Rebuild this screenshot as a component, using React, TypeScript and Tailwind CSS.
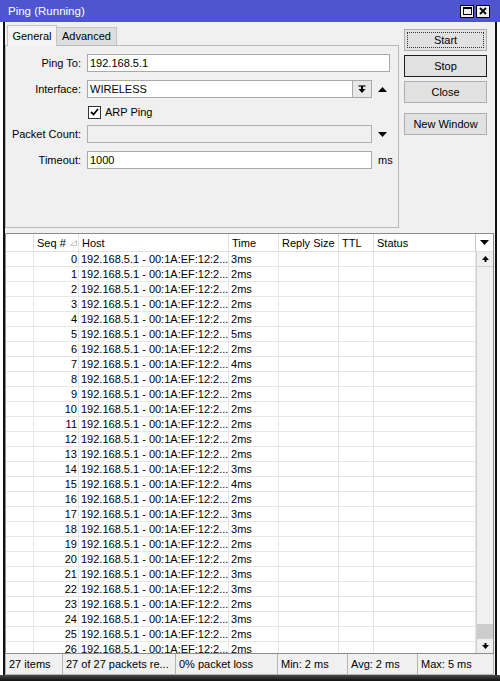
import React from 'react';

const times = [3, 2, 2, 2, 2, 5, 2, 4, 2, 2, 2, 2, 2, 2, 3, 4, 2, 3, 3, 2, 2, 3, 3, 2, 3, 2, 2];

function DownTri() {
  return (
    <svg width="9" height="5" viewBox="0 0 9 5">
      <path d="M0 0H9L4.5 5Z" fill="#000" />
    </svg>
  );
}

function UpTri() {
  return (
    <svg width="9" height="5" viewBox="0 0 9 5">
      <path d="M0 5H9L4.5 0Z" fill="#000" />
    </svg>
  );
}

function FormRow({ label, children }: { label: string; children: React.ReactNode }) {
  return (
    <div className="flex items-center h-[18px]">
      <div className="w-[76px] text-right pr-[1px] whitespace-nowrap">{label}</div>
      <div className="ml-[5px] flex items-center">{children}</div>
    </div>
  );
}

function WinButton({ label, kind }: { label: string; kind?: 'focus' | 'default' }) {
  const border = kind === 'default' ? 'border-[#1e1e1e]' : 'border-[#adadad]';
  return (
    <div className={`h-[22px] w-[83px] bg-[#e1e1e1] border ${border} flex items-center justify-center relative`}>
      {kind === 'focus' && (
        <div className="absolute inset-[2px] border border-dotted border-[#333]" />
      )}
      <span>{label}</span>
    </div>
  );
}

export default function App() {
  return (
    <div className="w-[500px] h-[681px] overflow-hidden bg-white flex flex-col font-['Liberation_Sans',Arial,sans-serif] text-[11px] text-black leading-[13px]">
      {/* title bar */}
      <div className="h-[22px] bg-[#4f55cf] flex items-center pl-[8px] pr-[10px]">
        <span className="text-white text-[11.5px]">Ping (Running)</span>
        <div className="ml-auto flex gap-[2px]">
          <div className="w-[14px] h-[13px] bg-[#f0f0f0] border border-black flex items-center justify-center">
            <div className="w-[9px] h-[8px] border border-black border-t-2" />
          </div>
          <div className="w-[14px] h-[13px] bg-[#f0f0f0] border border-black flex items-center justify-center">
            <svg width="8" height="8" viewBox="0 0 8 8">
              <path d="M1 1L7 7M7 1L1 7" stroke="#000" strokeWidth="1.8" />
            </svg>
          </div>
        </div>
      </div>

      <div className="flex flex-1">
        <div className="w-[3px] bg-white" />
        <div className="w-[2px] bg-[#111]" />

        {/* window content */}
        <div className="w-[490px] bg-[#f0f0f0] flex flex-col">
          <div className="flex pt-[2px]">
            <div className="w-[394px] flex flex-col">
              {/* tabs */}
              <div className="flex h-[21px] items-end pl-[2px]">
                <div className="h-[21px] w-[50px] bg-[#f4f4f4] border border-b-0 border-[#c4c4c4] flex items-center justify-center -mb-[1px] relative z-10">
                  General
                </div>
                <div className="h-[18px] w-[60px] bg-[#dedede] border border-b-0 border-l-0 border-[#c4c4c4] flex items-center justify-center">
                  Advanced
                </div>
              </div>
              {/* panel */}
              <div className="h-[183px] border border-[#b9b9b9] flex flex-col pt-[8px]">
                <FormRow label="Ping To:">
                  <div className="w-[303px] h-[18px] bg-white border border-[#a9a9a9] pl-[2px] flex items-center">
                    192.168.5.1
                  </div>
                </FormRow>
                <div className="mt-[8px]">
                  <FormRow label="Interface:">
                    <div className="w-[266px] h-[18px] bg-white border border-[#a9a9a9] pl-[2px] flex items-center">
                      WIRELESS
                    </div>
                    <div className="w-[19px] h-[18px] bg-[#e8e8e8] border border-l-0 border-[#a9a9a9] flex items-center justify-center">
                      <svg width="8" height="9" viewBox="0 0 8 9">
                        <path d="M0.5 1H7.5" stroke="#000" strokeWidth="1.2" />
                        <path d="M4 1V4" stroke="#000" strokeWidth="2" />
                        <path d="M0.5 4H7.5L4 8Z" fill="#000" />
                      </svg>
                    </div>
                    <div className="ml-[6px] flex items-center">
                      <UpTri />
                    </div>
                  </FormRow>
                </div>
                <div className="mt-[5px] h-[18px] flex items-center pl-[82px]">
                  <div className="w-[13px] h-[13px] bg-white border border-[#333] flex items-center justify-center">
                    <svg width="9" height="8" viewBox="0 0 9 8">
                      <path d="M1 4L3.5 6.5L8 1" stroke="#000" strokeWidth="1.8" fill="none" />
                    </svg>
                  </div>
                  <span className="ml-[4px]">ARP Ping</span>
                </div>
                <div className="mt-[4px]">
                  <FormRow label="Packet Count:">
                    <div className="w-[285px] h-[18px] bg-[#f0f0f0] border border-[#b0b0b0]" />
                    <div className="ml-[6px] flex items-center">
                      <DownTri />
                    </div>
                  </FormRow>
                </div>
                <div className="mt-[8px]">
                  <FormRow label="Timeout:">
                    <div className="w-[285px] h-[18px] bg-white border border-[#a9a9a9] pl-[2px] flex items-center">
                      1000
                    </div>
                    <span className="ml-[6px]">ms</span>
                  </FormRow>
                </div>
              </div>
            </div>

            {/* buttons */}
            <div className="ml-[5px] flex flex-col pt-[5px]">
              <WinButton label="Start" kind="focus" />
              <div className="mt-[4px]">
                <WinButton label="Stop" kind="default" />
              </div>
              <div className="mt-[4px]">
                <WinButton label="Close" />
              </div>
              <div className="mt-[10px]">
                <WinButton label="New Window" />
              </div>
            </div>
          </div>

          {/* table */}
          <div className="mt-[5px] w-[489px] h-[421px] border border-[#8c8c8c] bg-white flex flex-col">
            <div className="h-[18px] flex border-b border-[#e0e0e0] leading-[18px]">
              <div className="w-[28px] border-r border-[#e0e0e0]" />
              <div className="w-[45px] border-r border-[#e0e0e0] pl-[3px] flex items-center gap-[4px]">
                <span>Seq #</span>
                <svg width="7" height="6" viewBox="0 0 7 6">
                  <path d="M6.5 0.5V5.5H0.5Z" fill="none" stroke="#c4c4c4" />
                </svg>
              </div>
              <div className="w-[150px] border-r border-[#e0e0e0] pl-[3px] flex items-center">Host</div>
              <div className="w-[50px] border-r border-[#e0e0e0] pl-[3px] flex items-center">Time</div>
              <div className="w-[60px] border-r border-[#e0e0e0] pl-[3px] flex items-center">Reply Size</div>
              <div className="w-[35px] border-r border-[#e0e0e0] pl-[3px] flex items-center">TTL</div>
              <div className="w-[102px] border-r border-[#c8c8c8] pl-[3px] flex items-center">Status</div>
              <div className="w-[17px] flex items-center justify-center">
                <DownTri />
              </div>
            </div>

            <div className="flex h-[401px]">
              <div className="w-[470px] overflow-hidden">
                {times.map((t, i) => (
                  <div key={i} className="flex h-[15px] leading-[14px]">
                    <div className="w-[28px] border-r border-b border-[#e6e6e6]" />
                    <div className="w-[45px] border-r border-b border-[#e6e6e6] text-right pr-[1px]">{i}</div>
                    <div className="w-[150px] border-r border-b border-[#e6e6e6] pl-[2px] whitespace-nowrap overflow-hidden">
                      192.168.5.1 - 00:1A:EF:12:2...
                    </div>
                    <div className="w-[50px] border-r border-b border-[#e6e6e6] pl-[2px]">{t}ms</div>
                    <div className="w-[60px] border-r border-b border-[#e6e6e6]" />
                    <div className="w-[35px] border-r border-b border-[#e6e6e6]" />
                    <div className="w-[102px] border-r border-b border-[#e6e6e6]" />
                  </div>
                ))}
              </div>
              {/* scrollbar */}
              <div className="w-[17px] bg-[#f0f0f0] border-l border-[#d0d0d0] flex flex-col">
                <div className="h-[15px] border-b border-[#d0d0d0] flex items-center justify-center">
                  <svg width="7" height="6" viewBox="0 0 7 6">
                    <path d="M0 4H7L3.5 0Z" fill="#000" />
                    <rect x="2.5" y="4" width="2" height="2" fill="#000" />
                  </svg>
                </div>
                <div className="flex-1" />
                <div className="h-[14px] bg-[#cdcdcd]" />
                <div className="h-[15px] border-t border-[#d0d0d0] flex items-center justify-center">
                  <svg width="7" height="6" viewBox="0 0 7 6">
                    <rect x="2.5" y="0" width="2" height="2" fill="#000" />
                    <path d="M0 2H7L3.5 6Z" fill="#000" />
                  </svg>
                </div>
              </div>
            </div>
          </div>

          {/* status bar */}
          <div className="h-[21px] w-[489px] flex border-b border-[#b4b4b4]">
            <div className="w-[58px] border-l border-r border-[#b4b4b4] pl-[3px] flex items-center">27 items</div>
            <div className="w-[113px] border-r border-[#b4b4b4] pl-[3px] flex items-center whitespace-nowrap">27 of 27 packets re...</div>
            <div className="w-[102px] border-r border-[#b4b4b4] pl-[3px] flex items-center">0% packet loss</div>
            <div className="w-[70px] border-r border-[#b4b4b4] pl-[3px] flex items-center">Min: 2 ms</div>
            <div className="w-[70px] border-r border-[#b4b4b4] pl-[3px] flex items-center">Avg: 2 ms</div>
            <div className="w-[76px] border-r border-[#b4b4b4] pl-[3px] flex items-center">Max: 5 ms</div>
          </div>
        </div>

        <div className="w-[2px] bg-[#111]" />
        <div className="w-[3px] bg-white" />
      </div>

      <div className="h-[6px] bg-gradient-to-b from-[#4a4a4a] to-[#111]" />
    </div>
  );
}
